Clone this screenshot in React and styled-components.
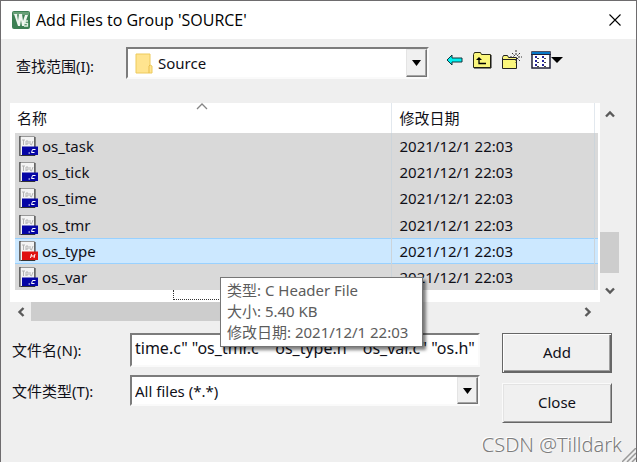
import React from 'react';
import styled, { createGlobalStyle, css } from 'styled-components';

const GlobalStyle = createGlobalStyle`
  *, *::before, *::after { box-sizing: border-box; }
  body {
    margin: 0;
    background: #efefef;
    color: #101018;
    font: 15px/20px "Noto Sans", "Noto Sans CJK SC", sans-serif;
  }
  button, input, select { font: inherit; color: inherit; margin: 0; }
  svg { display: block; flex: none; }
`;

const Dialog = styled.main`
  position: relative;
  display: flex;
  flex-direction: column;
  min-height: 100vh;
  overflow: hidden;
  border: 1px solid #6e6c6e;
  border-bottom: 0;
  background: #efefef;
`;

const TitleBar = styled.header`
  display: flex;
  align-items: center;
  gap: 6px;
  height: 38px;
  padding: 0 14px 0 11px;
  background: #fff;
`;

const Title = styled.h1`
  flex: 1;
  margin: 0;
  color: #000;
  font: 400 16px/20px "Open Sans", sans-serif;
`;

const BareButton = styled.button`
  display: flex;
  align-items: center;
  justify-content: center;
  padding: 0;
  border: 0;
  background: none;
`;

const LookInRow = styled.div`
  display: grid;
  grid-template-columns: 110px minmax(160px, 303px) auto 1fr;
  align-items: center;
  padding: 8px 15px 0;
`;

const Label = styled.label`
  white-space: nowrap;
`;

const LookInLabel = styled(Label)`
  padding-top: 6px;
`;

const sunken = css`
  border: 2px solid;
  border-color: #7c7c7c #fafafa #fafafa #7c7c7c;
  background: #fff;
`;

const ComboFrame = styled.div`
  ${sunken}
  position: relative;
  height: ${(p) => p.$height};
  min-width: 0;
`;

const Combo = styled.select`
  width: 100%;
  height: 100%;
  padding: 0 24px 0 ${(p) => (p.$withIcon ? '30px' : '3px')};
  border: 0;
  outline: 0;
  background: transparent;
  appearance: none;
`;

const ComboIcon = styled.span`
  position: absolute;
  left: 7px;
  top: 4px;
  pointer-events: none;
`;

const ComboArrow = styled.span`
  position: absolute;
  top: 0;
  right: 0;
  bottom: 0;
  display: flex;
  align-items: center;
  justify-content: center;
  width: 21px;
  border: 1px solid;
  border-color: #e4e4e4 #747474 #747474 #e4e4e4;
  box-shadow: inset -1px -1px #a4a4a4;
  background: #f0f0f0;
  pointer-events: none;
`;

const Tools = styled.div`
  display: flex;
  align-items: center;
  gap: 9px;
  padding: 0 0 6px 17px;
`;

const Browser = styled.section`
  display: grid;
  grid-template-columns: minmax(0, 1fr) 19px;
  margin: 24px 17px 0 9px;
`;

const ListPane = styled.div`
  height: 199px;
  padding-right: 2px;
  background: #fff;
`;

const FileTable = styled.table`
  width: 100%;
  height: 187px;
  border-collapse: collapse;
  table-layout: fixed;
`;

const Heading = styled.th`
  width: ${(p) => p.$width};
  height: 30px;
  padding: 0 0 0 ${(p) => (p.$first ? '7px' : '8px')};
  border-right: 1px solid #e2e8ee;
  text-align: left;
  font-weight: 400;
`;

const EdgeHeading = styled.th`
  width: 4px;
  padding: 0;
`;

const SortButton = styled(BareButton)`
  position: relative;
  width: 100%;
  justify-content: flex-start;
`;

const SortMark = styled.span`
  position: absolute;
  left: 50%;
  top: -5px;
  margin-left: -8px;
`;

const FileRow = styled.tr`
  background: ${(p) => (p.$hot ? '#cce8ff' : '#d9d9d9')};
  box-shadow: ${(p) => (p.$hot ? 'inset 0 1px #99d1ff, inset 0 -1px #99d1ff, inset 1px 0 #99d1ff' : 'none')};
`;

const Cell = styled.td`
  height: 26px;
  padding: 0 0 0 8px;
  border-right: ${(p) => (p.$edge ? '0' : '1px solid #ccd4da')};
  white-space: nowrap;
`;

const FileName = styled.span`
  display: flex;
  align-items: center;
  gap: 4px;
  padding-left: 1px;
`;

const FirstCell = styled(Cell)`
  background: linear-gradient(to right, #fff 5px, transparent 5px);
`;

const Marquee = styled.div`
  width: 140px;
  height: 10px;
  margin: 0 0 0 163px;
  border: 1px dotted #333;
  border-top: 0;
`;

const VerticalScroll = styled.div`
  display: grid;
  grid-template-rows: 20px 1fr 41px 29px;
  padding-top: 1px;
`;

const ScrollDown = styled(BareButton)`
  padding-top: 6px;
`;

const HorizontalScroll = styled.div`
  display: grid;
  grid-template-columns: 21px minmax(0, 1fr) minmax(0, 1fr) 24px;
  height: 19px;
`;

const Thumb = styled.div`
  background: #cdcdcd;
`;

const Form = styled.form`
  display: grid;
  grid-template-columns: minmax(0, 1fr) 110px;
  column-gap: 22px;
  align-items: start;
  padding: 12px 24px 0 11px;
`;

const Fields = styled.div`
  display: grid;
  grid-template-columns: 118px minmax(0, 1fr);
  row-gap: 8px;
  align-items: center;
`;

const Actions = styled.div`
  display: grid;
  row-gap: 10px;
`;

const NameInput = styled.input`
  ${sunken}
  width: 100%;
  height: 34px;
  padding: 0 3px 4px;
  outline: 0;
  font-size: 16px;
`;

const PushButton = styled.button`
  height: 40px;
  padding: 0 0 2px;
  border: ${(p) => (p.$primary ? '1px solid #666' : '1px solid')};
  ${(p) => !p.$primary && css`border-color: #fafafa #666 #666 #fafafa;`}
  background: #f0f0f0;
  box-shadow: ${(p) =>
    p.$primary
      ? 'inset 1px 1px #fff, inset -1px -1px #666, inset -2px -2px #a0a0a0'
      : 'inset 1px 1px #e3e3e3, inset -1px -1px #a0a0a0'};
`;

const Tooltip = styled.div`
  position: absolute;
  left: 219px;
  top: 276px;
  min-width: 203px;
  padding: 2px 8px 3px 6px;
  border: 1px solid #767676;
  background: #fff;
  box-shadow: 3px 3px 3px rgba(0, 0, 0, 0.5);
  color: #5c5c5c;
  line-height: 21px;
  white-space: nowrap;
`;

const Footer = styled.footer`
  display: flex;
  justify-content: flex-end;
  padding: 10px 14px 0 0;
`;

const Watermark = styled.span`
  color: #7c7c7c;
  font: 300 20px/24px "Noto Sans", sans-serif;
  text-shadow: -1px -1px #fff;
`;

const Grip = styled.span`
  position: absolute;
  right: 0;
  bottom: 0;
`;

const AppIcon = () => (
  <svg width="18" height="18" viewBox="0 0 18 18">
    <rect width="18" height="18" rx="2" fill="#3d8054" />
    <path d="M1 1h16v3H1z" fill="#68a078" />
    <path d="M2 3h3l1 7 1-7h3l1 7 2-6h3l-4 11h-2L9 9l-1 6H6z" fill="#f0f6f0" />
    <path d="M16 10h-3v2.500h2.500V15H12" fill="none" stroke="#e0f0e2" strokeWidth="1.300" />
  </svg>
);

const CloseIcon = () => (
  <svg width="14" height="14" viewBox="0 0 14 14">
    <path d="M1.500 1.500l11 11m0-11l-11 11" stroke="#000" strokeWidth="1.100" />
  </svg>
);

const FolderIcon = () => (
  <svg width="18" height="21" viewBox="0 0 18 21">
    <path d="M1 1h14v11l2 1v7H1z" fill="#ffe48f" stroke="#edca5d" />
    <path d="M14 20v-7l1-1" fill="none" stroke="#e8bd4a" />
  </svg>
);

const DownTriangle = ({ width = 9 }) => (
  <svg width={width} height="6" viewBox="0 0 10 6" preserveAspectRatio="none">
    <path d="M0 0h10L5 6z" fill="#000" />
  </svg>
);

const BackIcon = () => (
  <svg width="17" height="14" viewBox="0 0 17 14">
    <path d="M1 7l5-5v3h10v4H6v3z" fill="#00f0f0" stroke="#14343a" />
  </svg>
);

const UpFolderIcon = () => (
  <svg width="20" height="18" viewBox="0 0 20 18">
    <path d="M1.500 16.500v-13l1-2h6l1 2h9v13z" fill="#faf67c" stroke="#2a2a14" />
    <path d="M2 17h17V4" fill="none" stroke="#111" />
    <path d="M4 9l3-3 3 3z" fill="#000" />
    <path d="M7 8v4.500h7" fill="none" stroke="#000" strokeWidth="1.300" />
  </svg>
);

const NewFolderIcon = () => (
  <svg width="21" height="20" viewBox="0 0 21 20">
    <path d="M1.500 18.500v-11l1-2h4l1 2h8v11z" fill="#faf67c" stroke="#222" />
    <path d="M1 9.500h14" stroke="#222" />
    <path d="M15 0v5m0 4v4M9 7h4m4 0h4M11 3l3 3m2 2l3 3m0-8l-3 3" stroke="#333" strokeDasharray="2 1" />
  </svg>
);

const ViewIcon = () => (
  <svg width="20" height="18" viewBox="0 0 20 18">
    <rect x="1" y="1" width="18" height="16" fill="#fff" stroke="#202038" strokeWidth="1.500" />
    <path d="M1 1h18v2H1z" fill="#0878c8" />
    <path d="M0 3.500h20" stroke="#202038" />
    <path d="M4 5h2v2H4zm0 4h2v2H4zm0 4h2v2H4zm7-8h2v2h-2zm0 4h2v2h-2zm0 4h2v2h-2z" fill="#25259a" />
    <path d="M6 7.500h3m-3 4h3m-3 4h3m4-8h3m-3 4h3m-3 4h3" stroke="#444" strokeDasharray="2 1" />
  </svg>
);

const SourceFileIcon = ({ header }) => (
  <svg width="19" height="20" viewBox="0 0 19 20">
    <path d="M.5.5h15v19H.5z" fill="#f4f4f4" stroke="#999" />
    <path d="M1 0v20M16 1v18.500H2" fill="none" stroke="#333" />
    <path d="M3 4h3m-1.500 0v5M7 9V5h2v3H7m4-3v3l1.500 1L14 5" fill="none" stroke="#b4b4b4" />
    <path d="M3 10.500h16V19H3z" fill={header ? '#e01010' : '#0505a5'} />
    {header ? (
      <path d="M12.500 13l-1 4m4.500-4l-1 4m-3-2h3.500" fill="none" stroke="#fff" />
    ) : (
      <path d="M16.500 13.500h-3l-1 3h3M9.500 17h1.500" fill="none" stroke="#fff" />
    )}
  </svg>
);

const rotations = { up: 0, right: 90, down: 180, left: 270 };

const Chevron = ({ direction }) => (
  <svg width="12" height="12" viewBox="0 0 12 12">
    <path
      d="M2 8.500l4-4 4 4"
      fill="none"
      stroke="#5a5a5a"
      strokeWidth="2.400"
      transform={`rotate(${rotations[direction]} 6 6)`}
    />
  </svg>
);

const files = [
  { name: 'os_task' },
  { name: 'os_tick' },
  { name: 'os_time' },
  { name: 'os_tmr' },
  { name: 'os_type', header: true },
  { name: 'os_var' },
];

export default function App() {
  return (
    <>
      <GlobalStyle />
      <Dialog>
        <TitleBar>
          <AppIcon />
          <Title>Add Files to Group 'SOURCE'</Title>
          <BareButton aria-label="Close window"><CloseIcon /></BareButton>
        </TitleBar>

        <LookInRow>
          <LookInLabel htmlFor="folder">查找范围(I):</LookInLabel>
          <ComboFrame $height="32px">
            <Combo id="folder" $withIcon defaultValue="Source">
              <option>Source</option>
            </Combo>
            <ComboIcon><FolderIcon /></ComboIcon>
            <ComboArrow><DownTriangle /></ComboArrow>
          </ComboFrame>
          <Tools>
            <BareButton aria-label="Back"><BackIcon /></BareButton>
            <BareButton aria-label="Up one level"><UpFolderIcon /></BareButton>
            <BareButton aria-label="New folder"><NewFolderIcon /></BareButton>
            <BareButton aria-label="View"><ViewIcon /><DownTriangle width={12} /></BareButton>
          </Tools>
        </LookInRow>

        <Browser>
          <ListPane>
            <FileTable>
              <thead>
                <tr>
                  <Heading $first $width="auto">
                    <SortButton>
                      名称
                      <SortMark>
                        <svg width="12" height="7" viewBox="0 0 12 7">
                          <path d="M1 6l5-5 5 5" fill="none" stroke="#858585" strokeWidth="1.300" />
                        </svg>
                      </SortMark>
                    </SortButton>
                  </Heading>
                  <Heading $width="203px"><SortButton>修改日期</SortButton></Heading>
                  <EdgeHeading />
                </tr>
              </thead>
              <tbody>
                {files.map((file) => (
                  <FileRow key={file.name} $hot={file.header}>
                    <FirstCell>
                      <FileName><SourceFileIcon header={file.header} />{file.name}</FileName>
                    </FirstCell>
                    <Cell>2021/12/1 22:03</Cell>
                    <Cell $edge />
                  </FileRow>
                ))}
              </tbody>
            </FileTable>
            <Marquee />
          </ListPane>
          <VerticalScroll>
            <BareButton aria-label="Scroll up"><Chevron direction="up" /></BareButton>
            <span />
            <Thumb />
            <ScrollDown aria-label="Scroll down"><Chevron direction="down" /></ScrollDown>
          </VerticalScroll>
          <HorizontalScroll>
            <BareButton aria-label="Scroll left"><Chevron direction="left" /></BareButton>
            <Thumb />
            <span />
            <BareButton aria-label="Scroll right"><Chevron direction="right" /></BareButton>
          </HorizontalScroll>
        </Browser>

        <Form onSubmit={(event) => event.preventDefault()}>
          <Fields>
            <Label htmlFor="filename">文件名(N):</Label>
            <NameInput
              id="filename"
              defaultValue={'time.c" "os_tmr.c" "os_type.h" "os_var.c" "os.h"'}
            />
            <Label htmlFor="filetype">文件类型(T):</Label>
            <ComboFrame $height="31px">
              <Combo id="filetype" defaultValue="All files (*.*)">
                <option>All files (*.*)</option>
              </Combo>
              <ComboArrow><DownTriangle /></ComboArrow>
            </ComboFrame>
          </Fields>
          <Actions>
            <PushButton type="submit" $primary>Add</PushButton>
            <PushButton type="button">Close</PushButton>
          </Actions>
        </Form>

        <Footer><Watermark>CSDN @Tilldark</Watermark></Footer>

        <Tooltip role="tooltip">
          <div>类型: C Header File</div>
          <div>大小: 5.40 KB</div>
          <div>修改日期: 2021/12/1 22:03</div>
        </Tooltip>
        <Grip>
          <svg width="14" height="14" viewBox="0 0 14 14">
            <path d="M0 14L14 0M5 14l9-9M10 14l4-4" stroke="#999" strokeWidth="1.500" />
          </svg>
        </Grip>
      </Dialog>
    </>
  );
}
